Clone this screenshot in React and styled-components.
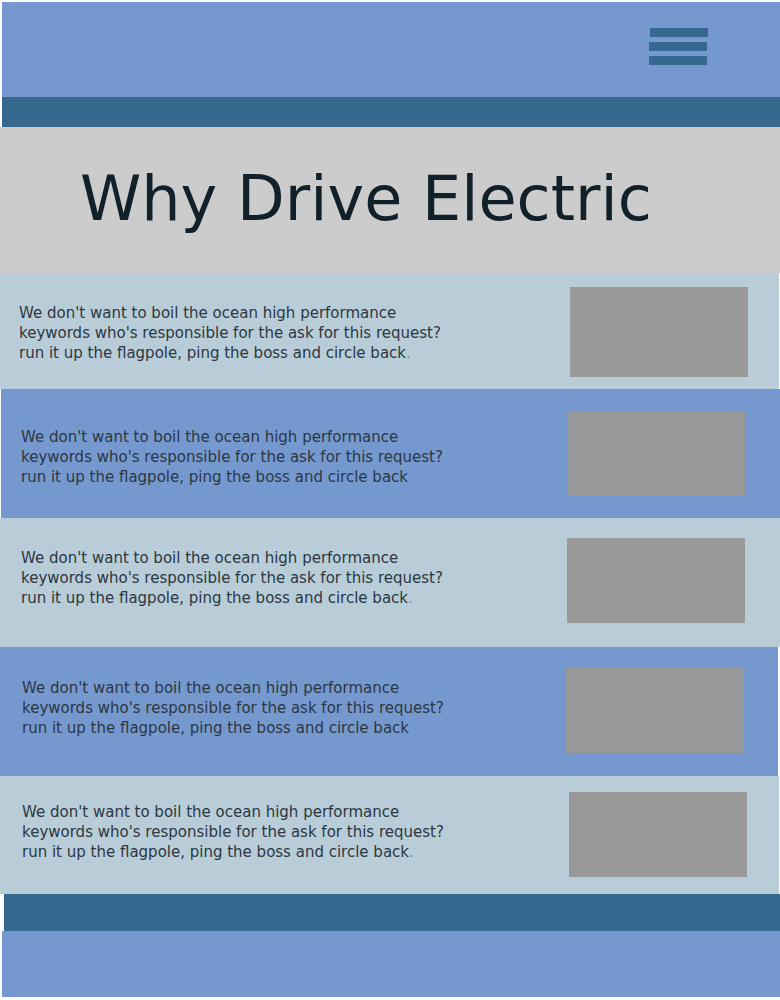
import React from 'react';
import styled, { createGlobalStyle } from 'styled-components';

const GlobalStyle = createGlobalStyle`
    body {
        margin: 0;
        background: #ffffff;
        font-family: 'DejaVu Sans', Verdana, sans-serif;
    }
`

const Page = styled.div`
    width: 780px;
    display: flex;
    flex-direction: column;
`
const Header = styled.header`
    height: 95px;
    margin: 2px 0 0 2px;
    background: #7599cf;
    display: flex;
    justify-content: flex-end;
    align-items: flex-start;
    padding: 26px 72px 0 0;
    box-sizing: border-box;
`
const Burger = styled.button`
    display: flex;
    flex-direction: column;
    gap: 5px;
    padding: 0;
    border: none;
    background: none;
    cursor: pointer;
`
const BurgerBar = styled.span`
    display: block;
    width: 58px;
    height: 9px;
    background: #35678f;
    margin-left: ${({shift}) => shift || 0}px;
`
const Strip = styled.div`
    height: ${({h}) => h}px;
    margin-left: ${({inset}) => inset || 0}px;
    background: #35678f;
`
const Hero = styled.section`
    height: 146px;
    background: #cccccc;
    display: flex;
    align-items: center;
    padding-left: 80px;
`
const Title = styled.h1`
    margin: 0 0 4px 0;
    font-family: 'DejaVu Sans', Verdana, sans-serif;
    font-weight: normal;
    font-size: 62px;
    color: #112029;
`
const Row = styled.section`
    height: ${({h}) => h}px;
    margin-left: ${({inset}) => inset || 0}px;
    width: ${({w}) => w || 780}px;
    background: ${({tone}) => tone === 'blue' ? '#7599cf' : '#b8cdd8'};
    display: flex;
    align-items: center;
    justify-content: space-between;
    padding: 0 ${({pr}) => pr}px 0 ${({pl}) => pl}px;
    box-sizing: border-box;
`
// shift a centred item up or down by dy px
const nudge = (dy) => dy > 0 ? `${dy * 2}px 0 0` : `0 0 ${-dy * 2}px`

const Copy = styled.p`
    margin: ${({dy}) => nudge(dy)};
    font-size: 15px;
    line-height: 20px;
    color: #2c3742;
    width: 432px;
`
const Dot = styled.span`
    color: #7f90a3;
`
const Thumb = styled.div`
    width: 178px;
    height: ${({h}) => h}px;
    margin: ${({dy}) => nudge(dy)};
    background: #999999;
    flex-shrink: 0;
`
const Footer = styled.footer`
    height: 66px;
    margin-left: 2px;
    background: #7599cf;
`

const rows = [
    {tone: 'light', h: 116, pl: 19, pr: 31, w: 779, img: 90, imgDy: 1, textDy: 1.5, dot: true},
    {tone: 'blue', h: 129, pl: 20, pr: 35, inset: 1, w: 779, img: 84, imgDy: 0, textDy: 3, dot: false},
    {tone: 'light', h: 129, pl: 21, pr: 35, img: 85, imgDy: -2, textDy: -5, dot: true},
    {tone: 'blue', h: 129, pl: 22, pr: 34, w: 778, img: 85, imgDy: -1, textDy: -4, dot: false},
    {tone: 'light', h: 118, pl: 22, pr: 32, w: 779, img: 85, imgDy: -0.5, textDy: -3, dot: true},
]

const App = () => {
    return (
        <Page>
            <GlobalStyle/>
            <Header>
                <Burger aria-label="menu">
                    <BurgerBar shift={1}/>
                    <BurgerBar/>
                    <BurgerBar/>
                </Burger>
            </Header>
            <Strip h={30} inset={2}/>
            <Hero>
                <Title>Why Drive Electric</Title>
            </Hero>
            {rows.map((r, i) => (
                <Row key={i} tone={r.tone} h={r.h} pl={r.pl} pr={r.pr} inset={r.inset} w={r.w}>
                    <Copy dy={r.textDy}>
                        We don't want to boil the ocean high performance keywords who's responsible for the ask for this request? run it up the flagpole, ping the boss and circle back{r.dot ? <Dot>.</Dot> : null}
                    </Copy>
                    <Thumb h={r.img} dy={r.imgDy}/>
                </Row>
            ))}
            <Strip h={37} inset={4}/>
            <Footer/>
        </Page>
    )
}

export default App;
